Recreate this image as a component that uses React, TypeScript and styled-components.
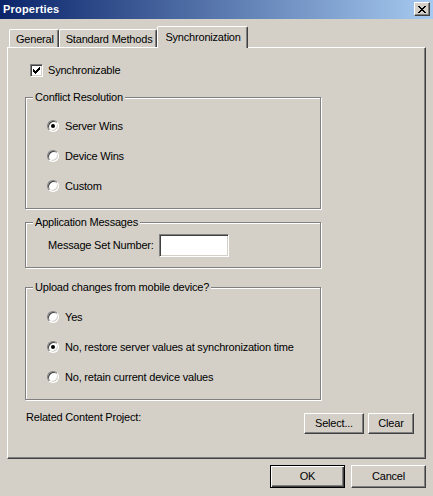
import React from "react";
import styled, { createGlobalStyle } from "styled-components";

const GlobalStyle = createGlobalStyle`
  html, body {
    margin: 0;
    padding: 0;
    background: #d4d0c8;
  }
  body {
    font-family: "Liberation Sans", Arial, sans-serif;
    font-size: 11px;
    letter-spacing: -0.2px;
    color: #000000;
  }
  * {
    box-sizing: border-box;
  }
`;

const Window = styled.div`
  width: 433px;
  height: 496px;
  display: flex;
  flex-direction: column;
  background: #d4d0c8;
  overflow: hidden;
`;

const TitleBar = styled.div`
  height: 19px;
  display: flex;
  align-items: flex-start;
  justify-content: space-between;
  padding: 0 3px 0 3px;
  background: linear-gradient(to right, #0a246a, #a6caf0);
`;

const Title = styled.span`
  color: #ffffff;
  font-weight: bold;
  font-size: 11px;
  letter-spacing: 0.2px;
  line-height: 13px;
  padding-top: 3px;
`;

const CloseButton = styled.div`
  width: 16px;
  height: 14px;
  margin-top: 2px;
  display: flex;
  align-items: center;
  justify-content: center;
  background: #d4d0c8;
  border: 1px solid;
  border-color: #ffffff #404040 #404040 #ffffff;
  box-shadow: inset -1px -1px #808080;
`;

const Body = styled.div`
  flex: 1;
  display: flex;
  flex-direction: column;
  padding: 7px 7px 0 7px;
`;

const TabStrip = styled.div`
  height: 21px;
  display: flex;
  align-items: flex-end;
  padding-left: 2px;
`;

const Tab = styled.div<{ $active?: boolean }>`
  position: relative;
  z-index: ${(p) => (p.$active ? 1 : 0)};
  height: ${(p) => (p.$active ? 22 : 18)}px;
  margin-bottom: ${(p) => (p.$active ? -1 : 0)}px;
  padding: ${(p) => (p.$active ? "4px 6px 0 7px" : "3px 4px 0 6px")};
  line-height: 13px;
  white-space: nowrap;
  background: #d4d0c8;
  border-left: 1px solid #ffffff;
  border-top: 1px solid #ffffff;
  border-right: 1px solid #404040;
  border-top-left-radius: 2px;
  border-top-right-radius: 2px;
  box-shadow: inset -1px 0 #808080;
`;

const TabPanel = styled.div`
  height: 412px;
  display: flex;
  flex-direction: column;
  padding: 16px 11px 0 17px;
  border: 1px solid;
  border-color: #ffffff #404040 #404040 #ffffff;
  box-shadow: inset -1px -1px #808080;
`;

const CheckRow = styled.label`
  display: flex;
  align-items: center;
  gap: 5px;
  height: 13px;
  margin-left: 5px;
  line-height: 13px;
`;

const CheckBox = styled.span`
  width: 13px;
  height: 13px;
  display: flex;
  align-items: center;
  justify-content: center;
  background: #ffffff;
  border: 1px solid;
  border-color: #808080 #ffffff #ffffff #808080;
  box-shadow: inset 1px 1px #404040, inset -1px -1px #d4d0c8;
`;

const GroupBox = styled.div<{ $gap: number }>`
  width: 296px;
  margin-top: ${(p) => p.$gap}px;
  display: flex;
  flex-direction: column;
  border: 1px solid #808080;
  box-shadow: 1px 1px 0 #ffffff, inset 1px 1px 0 #ffffff;
`;

const Legend = styled.div`
  align-self: flex-start;
  margin: -7px 0 0 7px;
  padding: 0 2px;
  line-height: 13px;
  background: #d4d0c8;
  white-space: nowrap;
`;

const GroupBody = styled.div<{ $top: number; $bottom: number }>`
  display: flex;
  flex-direction: column;
  padding: ${(p) => p.$top}px 0 ${(p) => p.$bottom}px 21px;
`;

const RadioRow = styled.label`
  height: 30px;
  display: flex;
  align-items: center;
  gap: 6px;
  line-height: 13px;
`;

const Radio = styled.span<{ $checked?: boolean }>`
  width: 12px;
  height: 12px;
  border-radius: 50%;
  display: flex;
  align-items: center;
  justify-content: center;
  background: #ffffff;
  border: 1px solid;
  border-color: #808080 #ffffff #ffffff #808080;
  box-shadow: inset 1px 1px #404040, inset -1px -1px #d4d0c8;

  &::after {
    content: "";
    width: 4px;
    height: 4px;
    border-radius: 50%;
    background: ${(p) => (p.$checked ? "#000000" : "transparent")};
  }
`;

const FieldRow = styled.div`
  display: flex;
  align-items: center;
  gap: 5px;
  padding-left: 1px;
  line-height: 13px;
`;

const TextInput = styled.div`
  width: 70px;
  height: 23px;
  background: #ffffff;
  border: 1px solid;
  border-color: #808080 #ffffff #ffffff #808080;
  box-shadow: inset 1px 1px #404040, inset -1px -1px #d4d0c8;
`;

const RelatedRow = styled.div`
  display: flex;
  justify-content: space-between;
  align-items: flex-start;
  margin-top: 11px;
  padding-left: 1px;
  line-height: 13px;
`;

const ButtonGroup = styled.div<{ $gap: number }>`
  display: flex;
  gap: ${(p) => p.$gap}px;
  margin-top: 2px;
`;

const Button = styled.div<{ $width: number; $height: number; $default?: boolean }>`
  width: ${(p) => p.$width}px;
  height: ${(p) => p.$height}px;
  display: flex;
  align-items: center;
  justify-content: center;
  line-height: 13px;
  background: #d4d0c8;
  border: 1px solid;
  border-color: ${(p) =>
    p.$default ? "#000000" : "#ffffff #404040 #404040 #ffffff"};
  box-shadow: ${(p) =>
    p.$default
      ? "inset 1px 1px #ffffff, inset -1px -1px #404040, inset -2px -2px #808080"
      : "inset -1px -1px #808080"};
`;

const Footer = styled.div`
  display: flex;
  justify-content: flex-end;
  gap: 6px;
  margin-top: 6px;
`;

const CheckMark = () => (
  <svg width="7" height="7" viewBox="0 0 7 7" shapeRendering="crispEdges">
    <rect x="6" y="0" width="1" height="1" />
    <rect x="5" y="1" width="2" height="1" />
    <rect x="0" y="2" width="1" height="1" />
    <rect x="4" y="2" width="3" height="1" />
    <rect x="0" y="3" width="2" height="1" />
    <rect x="3" y="3" width="3" height="1" />
    <rect x="0" y="4" width="5" height="1" />
    <rect x="1" y="5" width="3" height="1" />
    <rect x="2" y="6" width="1" height="1" />
  </svg>
);

const CloseGlyph = () => (
  <svg width="8" height="7" viewBox="0 0 8 7" shapeRendering="crispEdges">
    <rect x="0" y="0" width="2" height="1" />
    <rect x="6" y="0" width="2" height="1" />
    <rect x="1" y="1" width="2" height="1" />
    <rect x="5" y="1" width="2" height="1" />
    <rect x="2" y="2" width="4" height="1" />
    <rect x="3" y="3" width="2" height="1" />
    <rect x="2" y="4" width="4" height="1" />
    <rect x="1" y="5" width="2" height="1" />
    <rect x="5" y="5" width="2" height="1" />
    <rect x="0" y="6" width="2" height="1" />
    <rect x="6" y="6" width="2" height="1" />
  </svg>
);

export default function App() {
  return (
    <>
      <GlobalStyle />
      <Window>
        <TitleBar>
          <Title>Properties</Title>
          <CloseButton>
            <CloseGlyph />
          </CloseButton>
        </TitleBar>
        <Body>
          <TabStrip>
            <Tab>General</Tab>
            <Tab>Standard Methods</Tab>
            <Tab $active>Synchronization</Tab>
          </TabStrip>
          <TabPanel>
            <CheckRow>
              <CheckBox>
                <CheckMark />
              </CheckBox>
              Synchronizable
            </CheckRow>

            <GroupBox $gap={20}>
              <Legend>Conflict Resolution</Legend>
              <GroupBody $top={7} $bottom={7}>
                <RadioRow>
                  <Radio $checked />
                  Server Wins
                </RadioRow>
                <RadioRow>
                  <Radio />
                  Device Wins
                </RadioRow>
                <RadioRow>
                  <Radio />
                  Custom
                </RadioRow>
              </GroupBody>
            </GroupBox>

            <GroupBox $gap={13}>
              <Legend>Application Messages</Legend>
              <GroupBody $top={5} $bottom={10}>
                <FieldRow>
                  Message Set Number:
                  <TextInput />
                </FieldRow>
              </GroupBody>
            </GroupBox>

            <GroupBox $gap={19}>
              <Legend>Upload changes from mobile device?</Legend>
              <GroupBody $top={8} $bottom={7}>
                <RadioRow>
                  <Radio />
                  Yes
                </RadioRow>
                <RadioRow>
                  <Radio $checked />
                  No, restore server values at synchronization time
                </RadioRow>
                <RadioRow>
                  <Radio />
                  No, retain current device values
                </RadioRow>
              </GroupBody>
            </GroupBox>

            <RelatedRow>
              Related Content Project:
              <ButtonGroup $gap={4}>
                <Button $width={60} $height={21}>Select...</Button>
                <Button $width={46} $height={21}>Clear</Button>
              </ButtonGroup>
            </RelatedRow>
          </TabPanel>
          <Footer>
            <Button $width={75} $height={23} $default>OK</Button>
            <Button $width={75} $height={23}>Cancel</Button>
          </Footer>
        </Body>
      </Window>
    </>
  );
}
